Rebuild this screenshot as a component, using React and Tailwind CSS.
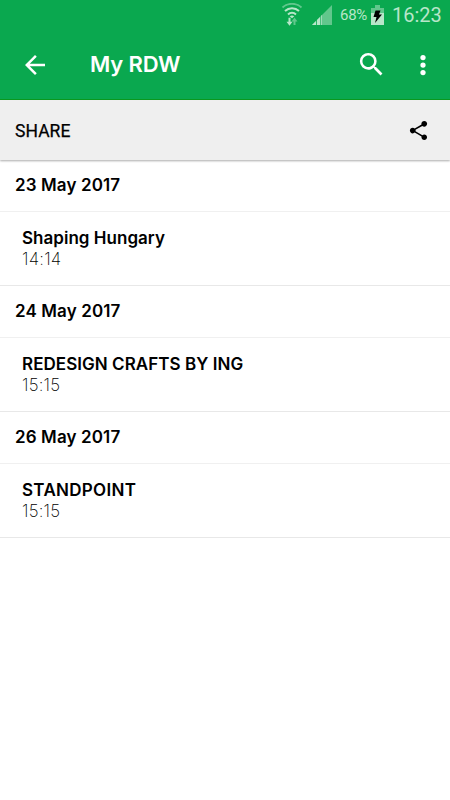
const days = [
  {
    date: "23 May 2017",
    title: "Shaping Hungary",
    time: "14:14",
    spacing: "tracking-[0.03px]",
  },
  {
    date: "24 May 2017",
    title: "REDESIGN CRAFTS BY ING",
    time: "15:15",
    spacing: "tracking-[0.05px]",
  },
  {
    date: "26 May 2017",
    title: "STANDPOINT",
    time: "15:15",
    spacing: "tracking-[0.3px]",
  },
];

const StatusBar = () => {
  return (
    <div className="h-[30px] flex items-center justify-end pr-[9px] text-[#b8e6c9] font-['Roboto',sans-serif]">
      {/* Wifi */}
      <svg width="22" height="24" viewBox="0 0 22 24" className="mr-[9px]">
        <g fill="none" stroke="#b8e6c9" strokeWidth="2">
          <path d="M1.5 4.4a14.5 14.5 0 0 1 19 0" opacity="0.5" />
          <path d="M4 8a10.2 10.2 0 0 1 14 0" />
          <path d="M7 11.4a6 6 0 0 1 8 0" />
        </g>
        <path d="M8.7 13.2a4 4 0 0 1 4.6 0L11 15.2z" fill="#b8e6c9" />
        <path d="M7.5 14.8h2v4h2l-3 4-3-4h2z" fill="#b8e6c9" />
        <path d="M12.5 22h2v-3.5h2l-3-4-3 4h2z" fill="#b8e6c9" opacity="0.5" />
      </svg>
      {/* Signal */}
      <svg width="20" height="20" viewBox="0 0 20 20" className="mr-[8px]">
        <path d="M0 20 20 0v20z" fill="#b8e6c9" opacity="0.5" />
        <path d="M0 20 10 10v10z" fill="#b8e6c9" />
        <path d="M4.5 15v5M8.7 11v9" stroke="#0aa84f" strokeWidth="0.8" />
      </svg>
      <span className="w-[27px] mr-[4px] text-[15px] tracking-[-0.3px] whitespace-nowrap">
        68%
      </span>
      {/* Battery */}
      <svg width="13" height="20" viewBox="0 0 13 20" className="mr-[8px]">
        <path d="M4 0h5v3h4v5H0V3h4z" fill="#b8e6c9" opacity="0.5" />
        <path d="M0 8h13v12H0z" fill="#b8e6c9" />
        <path d="M4.5 5.5h5L8 9.5h3L4 18l1.5-6H2.5z" fill="#000" />
      </svg>
      <span className="w-[49px] text-[20px] whitespace-nowrap">16:23</span>
    </div>
  );
};

const Toolbar = () => {
  return (
    <div className="h-[70px] flex items-center px-5 border-b border-[#0b9c1f] text-white">
      <button aria-label="Back" className="mr-10">
        <svg width="30" height="30" viewBox="0 0 24 24" fill="currentColor">
          <path d="M20 11H7.83l5.59-5.59L12 4l-8 8 8 8 1.41-1.41L7.83 13H20v-2z" />
        </svg>
      </button>
      <h1 className="flex-1 pb-[2px] text-[22px] leading-[30px] font-semibold tracking-[-0.15px]">
        My RDW
      </h1>
      <button aria-label="Search" className="mr-[21px]">
        <svg width="31" height="31" viewBox="0 0 24 24" fill="currentColor">
          <path d="M15.5 14h-.79l-.28-.27A6.471 6.471 0 0 0 16 9.5 6.5 6.5 0 1 0 9.5 16c1.61 0 3.09-.59 4.23-1.57l.27.28v.79l5 4.99L20.49 19l-4.99-5zm-6 0C7.01 14 5 11.99 5 9.5S7.01 5 9.5 5 14 7.01 14 9.5 11.99 14 9.5 14z" />
        </svg>
      </button>
      <button aria-label="More" className="-mr-[7.5px]">
        <svg width="30" height="30" viewBox="0 0 24 24" fill="currentColor">
          <circle cx="12" cy="6" r="2.1" />
          <circle cx="12" cy="12" r="2.1" />
          <circle cx="12" cy="18" r="2.1" />
        </svg>
      </button>
    </div>
  );
};

const ShareBar = () => {
  return (
    <div className="relative h-[60px] flex items-center justify-between pl-[15px] pr-5 bg-[#efefef] shadow-[0_1px_2px_rgba(0,0,0,0.33)]">
      <span className="pt-[2px] text-[17.5px] font-['Roboto',sans-serif] tracking-[0.05px] [-webkit-text-stroke:0.25px_black]">
        SHARE
      </span>
      <svg width="23" height="23" viewBox="0 0 24 24" fill="#000">
        <path d="M18 16.08c-.76 0-1.44.3-1.96.77L8.91 12.7c.05-.23.09-.46.09-.7s-.04-.47-.09-.7l7.05-4.11c.54.5 1.25.81 2.04.81 1.66 0 3-1.34 3-3s-1.34-3-3-3-3 1.34-3 3c0 .24.04.47.09.7L8.04 9.81C7.5 9.31 6.79 9 6 9c-1.66 0-3 1.34-3 3s1.34 3 3 3c.79 0 1.5-.31 2.04-.81l7.12 4.16c-.05.21-.08.43-.08.65 0 1.61 1.31 2.92 2.92 2.92s2.92-1.31 2.92-2.92-1.31-2.92-2.92-2.92z" />
      </svg>
    </div>
  );
};

const App = () => {
  return (
    <div className="w-[450px] h-[800px] overflow-hidden bg-white text-black font-['Inter',sans-serif]">
      <header className="bg-[#0aa84f]">
        <StatusBar />
        <Toolbar />
      </header>
      <ShareBar />

      {/* Saved events by day */}
      <main>
        {days.map((day) => (
          <section key={day.date}>
            <h2 className="h-[52px] pl-[15px] border-b border-[#f0f0f0] text-[17px] leading-[51px] font-semibold tracking-[0.12px]">
              {day.date}
            </h2>
            <div className="h-[74px] pl-[22px] pt-[15px] border-b border-[#e8e8e8]">
              <h3
                className={`text-[17px] leading-[22px] font-semibold ${day.spacing}`}
              >
                {day.title}
              </h3>
              <p className="text-[17px] leading-[21px] font-extralight tracking-[0.2px]">
                {day.time}
              </p>
            </div>
          </section>
        ))}
      </main>
    </div>
  );
};

export default App;
